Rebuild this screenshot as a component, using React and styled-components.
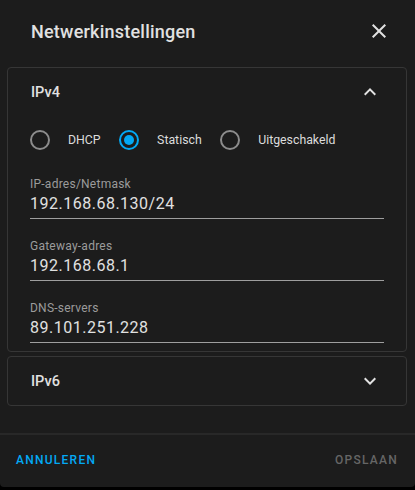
import React, { useState } from "react";
import styled, { createGlobalStyle } from "styled-components";

const GlobalStyle = createGlobalStyle`
  html, body {
    margin: 0;
    padding: 0;
    background: #000;
  }
  body {
    font-family: Roboto, "Noto Sans", "Liberation Sans", sans-serif;
    -webkit-font-smoothing: antialiased;
  }
`;

const Dialog = styled.div`
  width: 415px;
  height: 487px;
  background-color: #1c1c1c;
  border-radius: 0 0 4px 4px;
  display: flex;
  flex-direction: column;
  color: #e1e1e1;
  overflow: hidden;
`;

const Header = styled.div`
  height: 62px;
  padding: 0 24px 0 31px;
  display: flex;
  align-items: center;
  justify-content: space-between;
`;

const Title = styled.h2`
  margin: 0;
  font-size: 18px;
  font-weight: 500;
  letter-spacing: 0.0125em;
  color: #e1e1e1;
`;

const IconButton = styled.button`
  width: 24px;
  height: 24px;
  padding: 0;
  border: none;
  background: none;
  color: #e1e1e1;
  display: flex;
  cursor: pointer;
  svg {
    width: 24px;
    height: 24px;
    fill: currentColor;
  }
`;

const Content = styled.div`
  flex: 1;
  padding: 5px 8px 0 7px;
  display: flex;
  flex-direction: column;
  gap: 4px;
`;

const Panel = styled.div`
  border: 1px solid #363636;
  border-radius: 4px;
`;

const PanelHeader = styled.div`
  height: 48px;
  padding: 0 24px 0 23px;
  display: flex;
  align-items: center;
  justify-content: space-between;
  font-size: 14.5px;
  font-weight: 500;
  color: #e1e1e1;
  cursor: pointer;
  svg {
    width: 24px;
    height: 24px;
    fill: currentColor;
  }
`;

const PanelBody = styled.div`
  padding: 4px 22px 8px 22px;
`;

const RadioRow = styled.div`
  height: 40px;
  display: flex;
  align-items: center;
`;

const RadioItem = styled.label`
  display: flex;
  align-items: center;
  margin-right: 18.5px;
  font-size: 12.3px;
  color: #dcdcdc;
  cursor: pointer;
`;

const RadioCircle = styled.span`
  box-sizing: border-box;
  width: 20px;
  height: 20px;
  border-radius: 50%;
  border: 2px solid ${p => (p.checked ? "#03a9f4" : "#8c8c8c")};
  display: flex;
  align-items: center;
  justify-content: center;
  margin-right: 18px;
  &::after {
    content: "";
    width: 10px;
    height: 10px;
    border-radius: 50%;
    background: #03a9f4;
    display: ${p => (p.checked ? "block" : "none")};
  }
`;

const Fields = styled.div`
  margin-top: 16px;
  display: flex;
  flex-direction: column;
  gap: 19px;
`;

const Field = styled.div`
  display: flex;
  flex-direction: column;
  padding-bottom: 2px;
  border-bottom: 1px solid #9e9e9e;
`;

const FieldLabel = styled.span`
  font-size: 12px;
  line-height: 16px;
  letter-spacing: 0.02em;
  color: #9b9b9b;
`;

const FieldValue = styled.span`
  font-size: 16px;
  line-height: 24px;
  letter-spacing: 0.5px;
  color: #e1e1e1;
`;

const Footer = styled.div`
  height: 52px;
  border-top: 2px solid #282828;
  padding: 0 9px 0 8px;
  display: flex;
  align-items: center;
  justify-content: space-between;
`;

const TextButton = styled.button`
  height: 36px;
  padding: 0 8px;
  border: none;
  background: none;
  font-family: inherit;
  font-size: 12px;
  font-weight: 500;
  letter-spacing: 1.25px;
  text-transform: uppercase;
  color: ${p => (p.disabled ? "#666666" : "#03a9f4")};
  cursor: ${p => (p.disabled ? "default" : "pointer")};
  margin-top: -3px;
`;

const CloseIcon = () => (
  <svg viewBox="0 0 24 24">
    <path d="M19,6.41L17.59,5L12,10.59L6.41,5L5,6.41L10.59,12L5,17.59L6.41,19L12,13.41L17.59,19L19,17.59L13.41,12L19,6.41Z" />
  </svg>
);

const ChevronUp = () => (
  <svg viewBox="0 0 24 24">
    <path d="M7.41,15.41L12,10.83L16.59,15.41L18,14L12,8L6,14L7.41,15.41Z" />
  </svg>
);

const ChevronDown = () => (
  <svg viewBox="0 0 24 24">
    <path d="M7.41,8.58L12,13.17L16.59,8.58L18,10L12,16L6,10L7.41,8.58Z" />
  </svg>
);

const modes = [
  { key: "dhcp", label: "DHCP" },
  { key: "static", label: "Statisch" },
  { key: "disabled", label: "Uitgeschakeld" }
];

const fields = [
  { label: "IP-adres/Netmask", value: "192.168.68.130/24" },
  { label: "Gateway-adres", value: "192.168.68.1" },
  { label: "DNS-servers", value: "89.101.251.228" }
];

export default function App() {
  const [mode, setMode] = useState("static");
  const [ipv4Open, setIpv4Open] = useState(true);
  const [ipv6Open, setIpv6Open] = useState(false);

  return (
    <>
      <GlobalStyle />
      <Dialog>
        <Header>
          <Title>Netwerkinstellingen</Title>
          <IconButton aria-label="Sluiten">
            <CloseIcon />
          </IconButton>
        </Header>
        <Content>
          <Panel>
            <PanelHeader onClick={() => setIpv4Open(!ipv4Open)}>
              IPv4
              {ipv4Open ? <ChevronUp /> : <ChevronDown />}
            </PanelHeader>
            {ipv4Open && (
              <PanelBody>
                <RadioRow>
                  {modes.map(m => (
                    <RadioItem key={m.key} onClick={() => setMode(m.key)}>
                      <RadioCircle checked={mode === m.key} />
                      {m.label}
                    </RadioItem>
                  ))}
                </RadioRow>
                <Fields>
                  {fields.map(f => (
                    <Field key={f.label}>
                      <FieldLabel>{f.label}</FieldLabel>
                      <FieldValue>{f.value}</FieldValue>
                    </Field>
                  ))}
                </Fields>
              </PanelBody>
            )}
          </Panel>
          <Panel>
            <PanelHeader onClick={() => setIpv6Open(!ipv6Open)}>
              IPv6
              {ipv6Open ? <ChevronUp /> : <ChevronDown />}
            </PanelHeader>
          </Panel>
        </Content>
        <Footer>
          <TextButton>Annuleren</TextButton>
          <TextButton disabled>Opslaan</TextButton>
        </Footer>
      </Dialog>
    </>
  );
}
